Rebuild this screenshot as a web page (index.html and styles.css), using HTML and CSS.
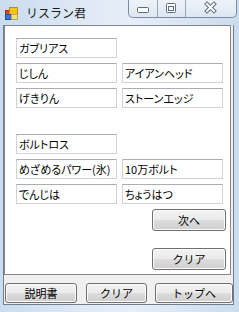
FILE: index.html
```html
<!DOCTYPE html>
<html lang="ja">
<head>
  <meta charset="UTF-8">
  <title>リスラン君</title>
  <link rel="stylesheet" href="styles.css">
</head>
<body>

<!-- Title bar -->
<div class="titlebar">
  <svg class="app-icon" width="13" height="13" viewBox="0 0 13 13">
    <rect x="0.5" y="3.5" width="5" height="5" fill="#e8402b" stroke="#a8281a"/>
    <rect x="4.5" y="0.5" width="8" height="7" fill="#f6c21c" stroke="#c48a0e"/>
    <rect x="0.5" y="7.5" width="6" height="5" fill="#3b74d6" stroke="#23509c"/>
    <rect x="6.5" y="7.5" width="6" height="5" fill="#f3e27a" stroke="#bba64a"/>
  </svg>
  <span class="caption">リスラン君</span>
  <div class="caption-buttons">
    <span class="cb cb-min">
      <svg width="28" height="17" viewBox="0 0 28 17"><rect x="8.5" y="7.5" width="11" height="5" rx="1" fill="#fff" stroke="#5d6b7e"/></svg>
    </span>
    <span class="cb cb-max">
      <svg width="27" height="17" viewBox="0 0 27 17"><rect x="8.5" y="3.5" width="9" height="9" rx="1" fill="#fff" stroke="#5d6b7e"/><rect x="10.5" y="6.5" width="5" height="4" fill="none" stroke="#5d6b7e"/></svg>
    </span>
    <span class="cb cb-close">
      <svg width="50" height="17" viewBox="0 0 50 17">
        <g stroke="#5d6b7e" stroke-width="4" stroke-linecap="square"><line x1="21" y1="4" x2="28" y2="11"/><line x1="28" y1="4" x2="21" y2="11"/></g>
        <g stroke="#fff" stroke-width="2" stroke-linecap="square"><line x1="21" y1="4" x2="28" y2="11"/><line x1="28" y1="4" x2="21" y2="11"/></g>
      </svg>
    </span>
  </div>
</div>

<!-- Client area -->
<div class="form">
  <div class="panel">
    <div class="row"><div class="tb">ガブリアス</div></div>
    <div class="row"><div class="tb">じしん</div><div class="tb">アイアンヘッド</div></div>
    <div class="row"><div class="tb">げきりん</div><div class="tb">ストーンエッジ</div></div>
    <div class="spacer"></div>
    <div class="row"><div class="tb">ボルトロス</div></div>
    <div class="row"><div class="tb">めざめるパワー(氷)</div><div class="tb">10万ボルト</div></div>
    <div class="row"><div class="tb">でんじは</div><div class="tb">ちょうはつ</div></div>
    <div class="actions">
      <button class="btn btn-side">次へ</button>
      <button class="btn btn-side">クリア</button>
    </div>
  </div>
  <div class="footer">
    <button class="btn btn-manual">説明書</button>
    <button class="btn btn-clear">クリア</button>
    <button class="btn btn-top">トップへ</button>
  </div>
</div>

</body>
</html>
```

FILE: styles.css
```css
body {
  margin: 0;
  width: 239px;
  height: 312px;
  overflow: hidden;
  font-family: "Noto Sans CJK JP", sans-serif;
  background: linear-gradient(to right, #cadcef, #dfe9f5 35%, #e6eef8 55%, #cbdcee 100%);
}

/* Title bar */
.titlebar {
  display: flex;
  align-items: flex-start;
  height: 25px;
}

.app-icon {
  margin: 7px 0 0 5px;
}

.caption {
  margin: 4px 0 0 8px;
  font-size: 12px;
  line-height: 17px;
  color: #1b1b1b;
}

.caption-buttons {
  display: flex;
  margin-left: auto;
  margin-right: 2px;
  height: 17px;
  border: 1px solid #7d8ca0;
  border-top: none;
  border-radius: 0 0 5px 5px;
  background: linear-gradient(#eef3f9, #dde7f2);
  overflow: hidden;
}

.cb {
  display: block;
  height: 17px;
}

.cb svg {
  display: block;
}

.cb-min, .cb-max {
  border-right: 1px solid #9aa8ba;
}

/* Client area */
.form {
  box-sizing: border-box;
  margin-left: 3px;
  width: 231px;
  height: 280px;
  border: 1px solid #6f7d90;
  border-top: none;
  background: #f0f0f0;
  display: flex;
  flex-direction: column;
}

.panel {
  box-sizing: border-box;
  width: 227px;
  height: 250px;
  border: 1px solid #828790;
  background: #fff;
  padding: 12px 4px 0 11px;
  display: flex;
  flex-direction: column;
  gap: 5px;
}

.row {
  display: flex;
  gap: 5px;
}

.spacer {
  height: 16px;
}

/* Text boxes */
.tb {
  box-sizing: border-box;
  width: 101px;
  height: 20px;
  border: 1px solid #cfd2d8;
  border-top-color: #abadb3;
  padding-left: 2px;
  font-size: 11px;
  line-height: 18px;
  font-feature-settings: "palt";
  color: #000;
  white-space: nowrap;
  overflow: hidden;
}

/* Buttons */
.btn {
  box-sizing: border-box;
  padding: 0;
  border: 1px solid #707070;
  border-radius: 3px;
  background: linear-gradient(#f2f2f2 0%, #ebebeb 50%, #dddddd 51%, #cfcfcf 100%);
  box-shadow: inset 0 0 0 1px #fbfbfb;
  font-family: "Noto Sans CJK JP", sans-serif;
  font-size: 11px;
  color: #000;
}

.actions {
  display: flex;
  flex-direction: column;
  align-items: flex-end;
  gap: 17px;
}

.btn-side {
  width: 74px;
  height: 22px;
}

.footer {
  display: flex;
  padding: 8px 0 0 1px;
}

.footer .btn {
  height: 20px;
}

.btn-manual {
  width: 72px;
}

.btn-clear {
  width: 61px;
  margin-left: 9px;
}

.btn-top {
  width: 78px;
  margin-left: 8px;
}
```
